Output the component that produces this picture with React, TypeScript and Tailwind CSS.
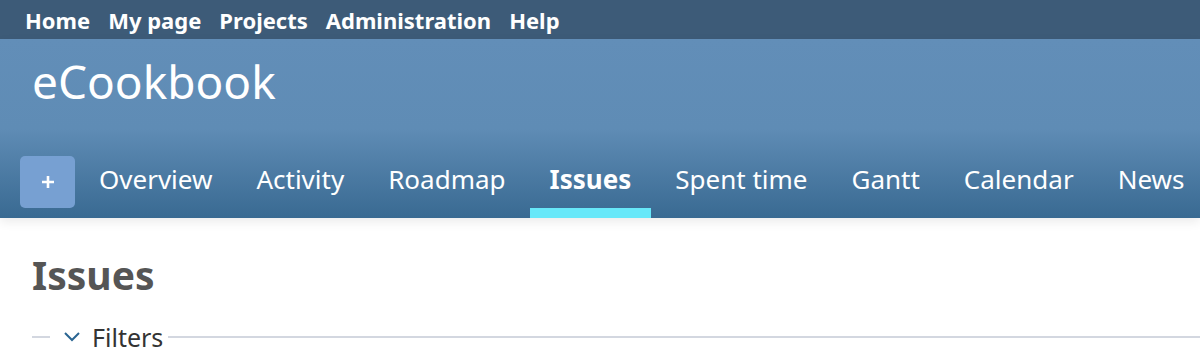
import { FC } from "react";

const topLinks = ["Home", "My page", "Projects", "Administration", "Help"];
const tabs = ["Overview", "Activity", "Roadmap", "Issues", "Spent time", "Gantt", "Calendar", "News"];

const App: FC = () => {
  return (
    <div className="min-h-[362px] bg-white font-['Noto_Sans',sans-serif] overflow-hidden">
      {/* top menu */}
      <div className="h-[39px] bg-[#3d5b78] flex items-center gap-[18px] pl-[25px]">
        {topLinks.map((l) => (
          <a key={l} className="text-white font-bold text-[22px] leading-none whitespace-nowrap">
            {l}
          </a>
        ))}
      </div>

      {/* header */}
      <div className="h-[179px] bg-gradient-to-b from-[#628eb8] via-[#5f8cb5] to-[#396a92] flex flex-col shadow-[0_4px_10px_rgba(0,0,0,0.08)] relative">
        <h1 className="text-white text-[46px] leading-none pl-[32px] pt-[19px] h-[117px]">eCookbook</h1>
        <div className="flex items-stretch h-[62px] pl-[20px]">
          <div className="w-[55px] h-[52px] shrink-0 rounded-[5px] bg-[#77a0d2] text-white flex items-center justify-center">
            <svg width="14" height="14" viewBox="0 0 14 14">
              <path d="M7 1 V13 M1 7 H13" stroke="white" strokeWidth="2.6" fill="none" />
            </svg>
          </div>
          <div className="flex ml-[2px]">
            {tabs.map((t) => (
              <div
                key={t}
                className={`shrink-0 whitespace-nowrap flex items-start pt-[4px] text-[26px] leading-[38px] text-white ${
                  t === "Issues"
                    ? "font-bold px-[20px] mx-[2px] border-b-[10px] border-[#67e8f9]"
                    : "px-[22px]"
                }`}
              >
                {t}
              </div>
            ))}
          </div>
        </div>
      </div>

      {/* content */}
      <div className="px-[32px] pt-[30px]">
        <h2 className="text-[#555] font-bold text-[39px] leading-[54px]">Issues</h2>
        <div className="mt-[20px] flex items-center">
          <div className="w-[18px] h-[2px] bg-[#d3d7e0]" />
          <svg width="18" height="12" viewBox="0 0 18 12" className="ml-[13px]">
            <path d="M2 2 L9 9 L16 2" fill="none" stroke="#2a6592" strokeWidth="2" />
          </svg>
          <span className="ml-[11px] text-[25px] leading-[30px] text-[#333]">Filters</span>
          <div className="flex-1 h-[2px] bg-[#d3d7e0] ml-[5px] mr-[-32px]" />
        </div>
      </div>
    </div>
  );
};

export default App;
